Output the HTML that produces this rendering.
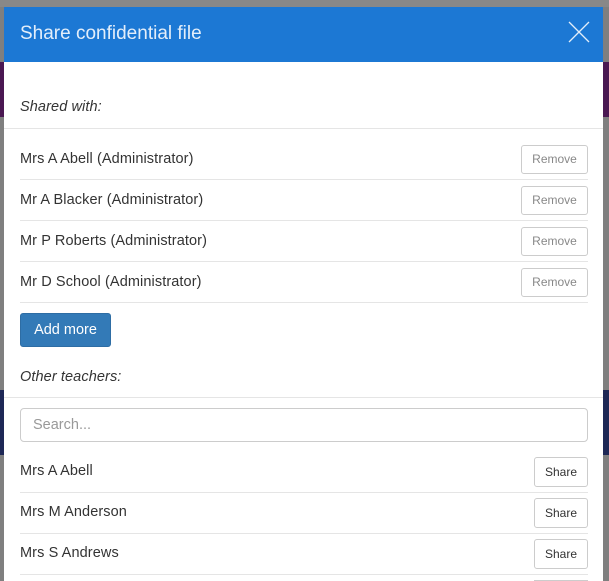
<!DOCTYPE html>
<html><head><style>
html,body{margin:0;width:609px;height:581px;overflow:hidden;}
body{background:#7f7f7f;position:relative;font-family:"Liberation Sans",sans-serif;}
.a{position:absolute}
.modal{left:4px;top:7px;width:599px;height:574px;background:#fff;}
.hdr{left:4px;top:7px;width:599px;height:55px;background:#1c78d4;}
.t{color:#333;font-size:14.5px;letter-spacing:0.1px}
.btn{position:absolute;border:1px solid #ccc;border-radius:3px;background:#fff;font-size:12px;text-align:center;box-sizing:border-box;}
.sep{position:absolute;left:20px;width:568px;height:1px;background:#e5e5e5;}
</style></head><body>
<div class="a" style="left:0;top:62px;width:609px;height:55px;background:#4a1852"></div>
<div class="a" style="left:0;top:390px;width:609px;height:65px;background:#1e2856"></div>
<div class="a" style="left:0;top:0;width:609px;height:7px;background:#888"></div>
<div class="a modal"></div>
<div class="a hdr"></div>
<div class="a" style="left:20px;top:23px;color:#e3eefa;font-size:19px;">Share confidential file</div>
<svg class="a" style="left:568px;top:21px" width="22" height="22"><path d="M1 1L21 21M21 1L1 21" stroke="#e3eefa" stroke-width="1.3"/></svg>
<div class="a t" style="left:20px;top:99px;font-style:italic;">Shared with:</div>
<div class="a" style="left:4px;top:128px;width:599px;height:1px;background:#e5e5e5"></div>

<div class="a t" style="left:20px;top:151px">Mrs A Abell (Administrator)</div>
<div class="btn" style="left:521px;top:145px;width:67px;height:29px;line-height:27px;color:#888">Remove</div>
<div class="sep" style="top:179px"></div>
<div class="a t" style="left:20px;top:192px">Mr A Blacker (Administrator)</div>
<div class="btn" style="left:521px;top:186px;width:67px;height:29px;line-height:27px;color:#888">Remove</div>
<div class="sep" style="top:220px"></div>
<div class="a t" style="left:20px;top:233px">Mr P Roberts (Administrator)</div>
<div class="btn" style="left:521px;top:227px;width:67px;height:29px;line-height:27px;color:#888">Remove</div>
<div class="sep" style="top:261px"></div>
<div class="a t" style="left:20px;top:274px">Mr D School (Administrator)</div>
<div class="btn" style="left:521px;top:268px;width:67px;height:29px;line-height:27px;color:#888">Remove</div>
<div class="sep" style="top:302px"></div>

<div class="a" style="left:20px;top:313px;width:91px;height:34px;background:#337ab7;border:1px solid #2e6da4;box-sizing:border-box;border-radius:3px;color:#fff;font-size:14.5px;line-height:32px;text-align:center">Add more</div>
<div class="a t" style="left:20px;top:369px;font-style:italic;">Other teachers:</div>
<div class="a" style="left:4px;top:397px;width:599px;height:1px;background:#e5e5e5"></div>
<div class="a" style="left:20px;top:408px;width:568px;height:34px;border:1px solid #ccc;border-radius:4px;box-sizing:border-box;color:#999;font-size:14.5px;line-height:32px;padding-left:12px">Search...</div>

<div class="a t" style="left:20px;top:463px">Mrs A Abell</div>
<div class="btn" style="left:534px;top:457px;width:54px;height:30px;line-height:28px;color:#333">Share</div>
<div class="sep" style="top:492px"></div>
<div class="a t" style="left:20px;top:504px">Mrs M Anderson</div>
<div class="btn" style="left:534px;top:498px;width:54px;height:30px;line-height:28px;color:#333">Share</div>
<div class="sep" style="top:533px"></div>
<div class="a t" style="left:20px;top:545px">Mrs S Andrews</div>
<div class="btn" style="left:534px;top:539px;width:54px;height:30px;line-height:28px;color:#333">Share</div>
<div class="sep" style="top:574px"></div>
<div class="a" style="left:534px;top:580px;width:54px;height:1px;background:#ccc"></div>
</body></html>
